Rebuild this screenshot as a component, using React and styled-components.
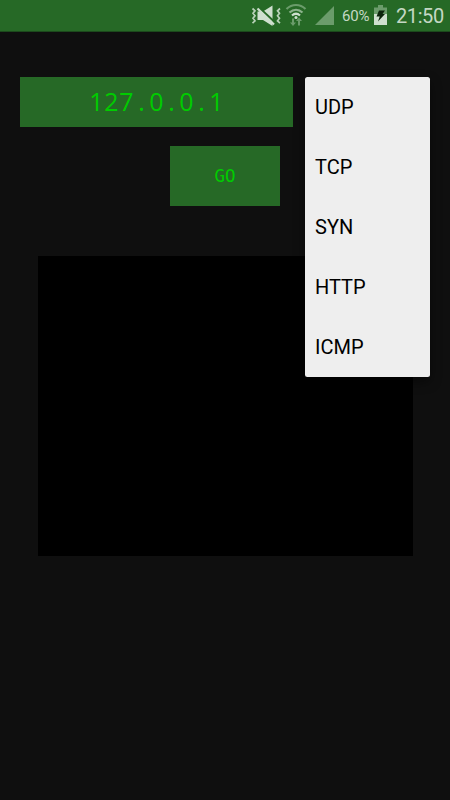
import React, { useState } from 'react';
import styled, { createGlobalStyle } from 'styled-components';

const GlobalStyle = createGlobalStyle`
  body {
    margin: 0;
    background: #0f0f0f;
  }

  * {
    box-sizing: border-box;
  }
`;

const Screen = styled.div`
  width: 450px;
  height: 800px;
  display: flex;
  flex-direction: column;
  background: #0f0f0f;
  overflow: hidden;
  font-family: Roboto, sans-serif;
`;

const StatusBar = styled.header`
  flex: none;
  display: flex;
  align-items: center;
  justify-content: flex-end;
  height: 32px;
  padding-right: 6px;
  background: #266926;
  border-bottom: 1px solid #1c4a1c;
  color: #c4d8c4;
`;

const StatusIcon = styled.svg`
  flex: none;
  display: block;
  margin-right: ${props => props.$gap}px;
`;

const Percent = styled.span`
  width: 28px;
  margin-right: 4px;
  font-size: 15px;
  line-height: 32px;
  letter-spacing: -0.2px;
  white-space: nowrap;
`;

const Clock = styled.span`
  width: 48px;
  font-size: 20px;
  line-height: 32px;
  letter-spacing: -0.4px;
  white-space: nowrap;
`;

const Content = styled.main`
  position: relative;
  flex: 1;
  display: flex;
  flex-direction: column;
  align-items: center;
  padding: 44.5px 20px 0;
`;

const AddressField = styled.div`
  align-self: flex-start;
  display: flex;
  align-items: center;
  justify-content: center;
  width: 273px;
  height: 50px;
  background: #266926;
  color: #00cc00;
  font-family: 'Open Sans', 'Noto Sans', sans-serif;
  font-size: 25px;
  line-height: 49px;
`;

// fixed-width cell, keeps the address monospaced
const Cell = styled.span`
  display: inline-block;
  width: 15px;
  height: 50px;
  text-align: center;
`;

const GoButton = styled.button`
  width: 110px;
  height: 60px;
  margin-top: 19px;
  padding: 0;
  border: 0;
  background: #266926;
  color: #00cc00;
  font-family: 'DejaVu Sans Mono', monospace;
  font-size: 17.5px;
  line-height: 60px;
`;

const Output = styled.div`
  width: 375px;
  height: 300px;
  margin-top: 50.5px;
  background: #000;
`;

const Menu = styled.ul`
  position: absolute;
  top: 44.5px;
  right: 20px;
  width: 125px;
  margin: 0;
  padding: 0;
  list-style: none;
  background: #eee;
  border-radius: 2.5px;
  box-shadow: 0 5px 12px rgba(0, 0, 0, 0.45);
`;

const MenuItem = styled.li`
  height: 60px;
  padding-left: 10px;
  color: #000;
  font-size: 20px;
  line-height: 61px;
  cursor: pointer;
`;

const MuteIcon = () => (
  <StatusIcon width="30" height="30" viewBox="0 0 30 30" $gap={4}>
    <path d="M6.500 10.500h5.500l9.500-6v20.500l-9.500-6H6.500z" fill="#cfe0cf" />
    <path d="M7.500 6l15.500 14.500" stroke="#266926" strokeWidth="2.200" />
    <path d="M6.500 7.500l16.500 16" stroke="#cfe0cf" strokeWidth="2.200" />
    <path
      d="M1.500 7.500l2.500 2.300-2 2.500 2 2.500-2 2.500 2 2.500-2.500 2.300M29 7.500l-2.500 2.300 2 2.500-2 2.500 2 2.500-2 2.500 2.500 2.300"
      fill="none"
      stroke="#b9d1b9"
      strokeWidth="1.700"
    />
  </StatusIcon>
);

const WifiIcon = () => (
  <StatusIcon width="22" height="30" viewBox="0 0 22 30" $gap={8}>
    <g fill="none" strokeWidth="2.200">
      <path d="M1.500 8c5.500-5.300 13.500-5.300 19 0" stroke="#6b9c6b" />
      <path d="M4.500 11.500c4-3.600 9-3.600 13 0" stroke="#8db38d" />
      <path d="M7 14.500c2.500-2.200 5.500-2.200 8 0" stroke="#cfe0cf" />
    </g>
    <circle cx="11" cy="16.500" r="1.500" fill="#cfe0cf" />
    <path d="M8 17.500v5M14 19v5.500" stroke="#6b9c6b" strokeWidth="2" />
    <path d="M5 21.500h6L8 25zM11 20h6l-3-3.500z" fill="#6b9c6b" />
  </StatusIcon>
);

const SignalIcon = () => (
  <StatusIcon width="19" height="19" viewBox="0 0 19 19" $gap={8}>
    <path d="M19 0v19H0z" fill="#6b9c6b" />
  </StatusIcon>
);

const BatteryIcon = () => (
  <StatusIcon width="13" height="21" viewBox="0 0 13 21" $gap={9}>
    <path d="M4 0h5v2.500h4V9H0V2.500h4z" fill="#6b9c6b" />
    <path d="M0 9h13v11H0z" fill="#cfe0cf" />
    <path d="M5 5.500h6L8.500 9h2.500L4 16.500l1.700-5H2.500z" fill="#0c240c" />
  </StatusIcon>
);

const METHODS = ['UDP', 'TCP', 'SYN', 'HTTP', 'ICMP'];

const App = () => {
  const [address] = useState('127.0.0.1');

  return (
    <Screen>
      <GlobalStyle />
      <StatusBar>
        <MuteIcon />
        <WifiIcon />
        <SignalIcon />
        <Percent>60%</Percent>
        <BatteryIcon />
        <Clock>21:50</Clock>
      </StatusBar>
      <Content>
        <AddressField>
          {address.split('').map((char, i) => <Cell key={i}>{char}</Cell>)}
        </AddressField>
        <GoButton>GO</GoButton>
        <Output />
        <Menu>
          {METHODS.map(method => <MenuItem key={method}>{method}</MenuItem>)}
        </Menu>
      </Content>
    </Screen>
  );
};

export default App;
